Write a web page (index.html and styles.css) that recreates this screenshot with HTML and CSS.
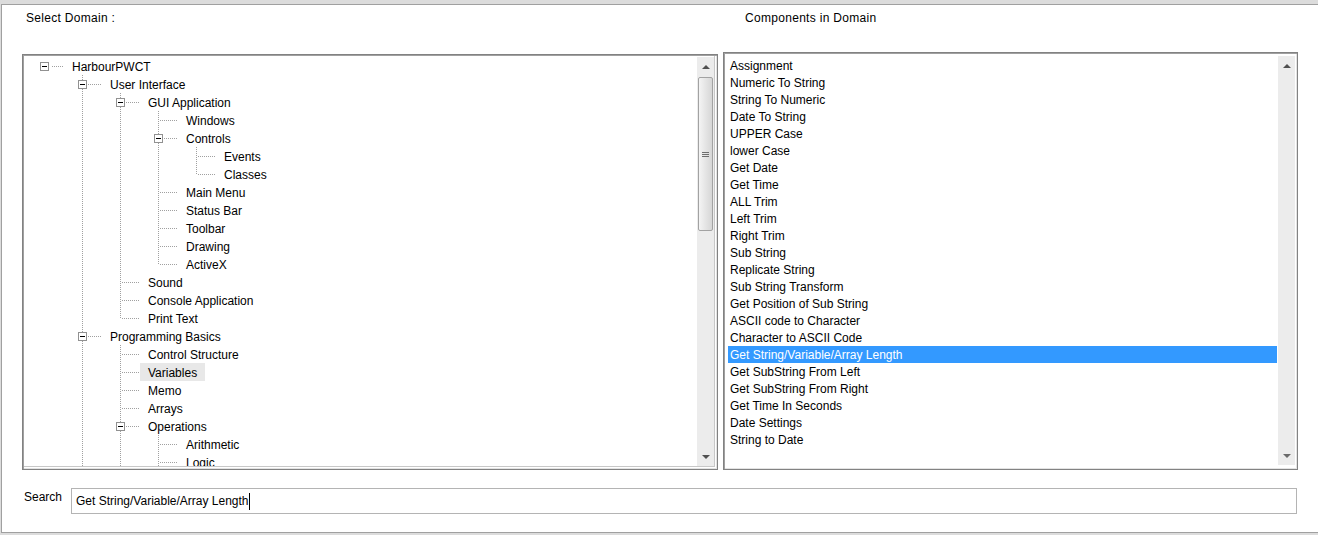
FILE: index.html
```html
<!DOCTYPE html>
<html>
<head>
<meta charset="utf-8">
<title>Domains</title>
<link rel="stylesheet" href="styles.css">
</head>
<body>
<div class="window">
  <div class="frame">
    <div class="labels">
      <div class="lab-left">Select Domain :</div>
      <div class="lab-right">Components in Domain</div>
    </div>
    <div class="panels">
      <div class="tree-box">
        <div class="tree">
          <div class="row"><span class="n r"><span class="box"><span></span></span></span><span class="lbl">HarbourPWCT</span></div>
          <div class="row"><span class="g"></span><span class="n t"><span class="box"><span></span></span></span><span class="lbl">User Interface</span></div>
          <div class="row"><span class="g"></span><span class="g v"></span><span class="n t"><span class="box"><span></span></span></span><span class="lbl">GUI Application</span></div>
          <div class="row"><span class="g"></span><span class="g v"></span><span class="g v"></span><span class="n t"></span><span class="lbl">Windows</span></div>
          <div class="row"><span class="g"></span><span class="g v"></span><span class="g v"></span><span class="n t"><span class="box"><span></span></span></span><span class="lbl">Controls</span></div>
          <div class="row"><span class="g"></span><span class="g v"></span><span class="g v"></span><span class="g v"></span><span class="n t"></span><span class="lbl">Events</span></div>
          <div class="row"><span class="g"></span><span class="g v"></span><span class="g v"></span><span class="g v"></span><span class="n l"></span><span class="lbl">Classes</span></div>
          <div class="row"><span class="g"></span><span class="g v"></span><span class="g v"></span><span class="n t"></span><span class="lbl">Main Menu</span></div>
          <div class="row"><span class="g"></span><span class="g v"></span><span class="g v"></span><span class="n t"></span><span class="lbl">Status Bar</span></div>
          <div class="row"><span class="g"></span><span class="g v"></span><span class="g v"></span><span class="n t"></span><span class="lbl">Toolbar</span></div>
          <div class="row"><span class="g"></span><span class="g v"></span><span class="g v"></span><span class="n t"></span><span class="lbl">Drawing</span></div>
          <div class="row"><span class="g"></span><span class="g v"></span><span class="g v"></span><span class="n l"></span><span class="lbl">ActiveX</span></div>
          <div class="row"><span class="g"></span><span class="g v"></span><span class="n t"></span><span class="lbl">Sound</span></div>
          <div class="row"><span class="g"></span><span class="g v"></span><span class="n t"></span><span class="lbl">Console Application</span></div>
          <div class="row"><span class="g"></span><span class="g v"></span><span class="n l"></span><span class="lbl">Print Text</span></div>
          <div class="row"><span class="g"></span><span class="n t"><span class="box"><span></span></span></span><span class="lbl">Programming Basics</span></div>
          <div class="row"><span class="g"></span><span class="g v"></span><span class="n t"></span><span class="lbl">Control Structure</span></div>
          <div class="row"><span class="g"></span><span class="g v"></span><span class="n t"></span><span class="lbl hov">Variables</span></div>
          <div class="row"><span class="g"></span><span class="g v"></span><span class="n t"></span><span class="lbl">Memo</span></div>
          <div class="row"><span class="g"></span><span class="g v"></span><span class="n t"></span><span class="lbl">Arrays</span></div>
          <div class="row"><span class="g"></span><span class="g v"></span><span class="n t"><span class="box"><span></span></span></span><span class="lbl">Operations</span></div>
          <div class="row"><span class="g"></span><span class="g v"></span><span class="g v"></span><span class="n t"></span><span class="lbl">Arithmetic</span></div>
          <div class="row"><span class="g"></span><span class="g v"></span><span class="g v"></span><span class="n t"></span><span class="lbl">Logic</span></div>
        </div>
        <div class="sbar">
          <div class="sbtn"><span class="arr up"></span></div>
          <div class="track">
            <div class="thumb"><span class="grip"></span></div>
          </div>
          <div class="sbtn"><span class="arr down"></span></div>
        </div>
      </div>
      <div class="list-box">
        <div class="list">
          <div class="item">Assignment</div>
          <div class="item">Numeric To String</div>
          <div class="item">String To Numeric</div>
          <div class="item">Date To String</div>
          <div class="item">UPPER Case</div>
          <div class="item">lower Case</div>
          <div class="item">Get Date</div>
          <div class="item">Get Time</div>
          <div class="item">ALL Trim</div>
          <div class="item">Left Trim</div>
          <div class="item">Right Trim</div>
          <div class="item">Sub String</div>
          <div class="item">Replicate String</div>
          <div class="item">Sub String Transform</div>
          <div class="item">Get Position of Sub String</div>
          <div class="item">ASCII code to Character</div>
          <div class="item">Character to ASCII Code</div>
          <div class="item sel">Get String/Variable/Array Length</div>
          <div class="item">Get SubString From Left</div>
          <div class="item">Get SubString From Right</div>
          <div class="item">Get Time In Seconds</div>
          <div class="item">Date Settings</div>
          <div class="item">String to Date</div>
        </div>
        <div class="sbar sbar-r">
          <div class="sbtn"><span class="arr up"></span></div>
          <div class="track"></div>
          <div class="sbtn"><span class="arr down light"></span></div>
        </div>
      </div>
    </div>
    <div class="search">
      <div class="search-label">Search</div>
      <div class="search-input">Get String/Variable/Array Length<span class="caret"></span></div>
    </div>
  </div>
</div>
</body>
</html>
```
FILE: styles.css
```css
* { box-sizing: border-box; }
html, body { margin: 0; padding: 0; }
body {
  width: 1318px;
  height: 535px;
  overflow: hidden;
  background: #dcdcdc;
  font-family: "Liberation Sans", Arial, sans-serif;
  font-size: 12px;
  color: #000;
}
.window {
  height: 535px;
  padding: 4px 0 2px 1px;
  background: #dcdcdc;
}
.frame {
  height: 529px;
  background: #fff;
  border-top: 1px solid #a0a0a0;
  border-left: 1px solid #a0a0a0;
  border-bottom: 1px solid #a0a0a0;
  display: flex;
  flex-direction: column;
}
.labels {
  display: grid;
  grid-template-columns: 696px 575px;
  column-gap: 5px;
  padding: 7px 0 0 20px;
  height: 20px;
  line-height: 13px;
  letter-spacing: 0.3px;
}
.lab-left { padding-left: 4px; }
.lab-right { padding-left: 22px; }

.panels {
  display: grid;
  grid-template-columns: 696px 575px;
  column-gap: 5px;
  padding-left: 20px;
  margin-top: 27px;
  align-items: start;
}
.tree-box {
  margin-top: 2px;
  height: 416px;
  display: flex;
  border: 1px solid #828282;
  padding: 1px 3px 3px 1px;
  box-shadow: inset 1px 1px 0 #a0a0a0, inset -1px -1px 0 #e3e3e3, inset -2px -2px 0 #ffffff, inset -3px -3px 0 #c8c8c8;
  background: #fff;
}
.tree {
  flex: 1;
  overflow: hidden;
  padding: 1px 0 0 2px;
}
.row {
  display: flex;
  height: 18px;
  white-space: nowrap;
}
.g, .n {
  flex: 0 0 38px;
  width: 38px;
  height: 18px;
}
.g.v {
  background: repeating-linear-gradient(to bottom, #a0a0a0 0 1px, transparent 1px 2px) 18px 0 / 1px 18px no-repeat;
}
.n {
  display: flex;
  align-items: center;
  padding-left: 14px;
}
.n.t {
  background:
    repeating-linear-gradient(to bottom, #a0a0a0 0 1px, transparent 1px 2px) 18px 0 / 1px 18px no-repeat,
    repeating-linear-gradient(to right, #a0a0a0 0 1px, transparent 1px 2px) 20px 9px / 18px 1px no-repeat;
}
.n.l {
  background:
    repeating-linear-gradient(to bottom, #a0a0a0 0 1px, transparent 1px 2px) 18px 0 / 1px 10px no-repeat,
    repeating-linear-gradient(to right, #a0a0a0 0 1px, transparent 1px 2px) 20px 9px / 18px 1px no-repeat;
}
.n.r {
  background:
    repeating-linear-gradient(to right, #a0a0a0 0 1px, transparent 1px 2px) 26px 9px / 12px 1px no-repeat;
}
.box {
  width: 9px;
  height: 9px;
  margin-top: 1px;
  border: 1px solid #919191;
  background: #fff;
  display: flex;
  align-items: center;
  justify-content: center;
}
.box span {
  width: 5px;
  height: 1px;
  background: #000;
}
.lbl {
  padding: 1px 8px 0;
  height: 18px;
  line-height: 18px;
}
.lbl.hov { background: #e8e8e8; }

.sbar {
  flex: 0 0 17px;
  width: 17px;
  display: flex;
  flex-direction: column;
  background: #ececec;
  margin: 1px 0 0;
}
.sbtn {
  height: 19px;
  display: flex;
  align-items: center;
  justify-content: center;
}
.track {
  flex: 1;
  padding: 1px 1px 0 1px;
}
.thumb {
  height: 154px;
  border: 1px solid #a2a2a2;
  border-radius: 2px;
  background: linear-gradient(to right, #f4f4f4, #e2e2e2 60%, #d6d6d6);
  display: flex;
  align-items: center;
  justify-content: center;
}
.grip {
  width: 7px;
  height: 5px;
  background: repeating-linear-gradient(to bottom, #6e6e6e 0 1px, transparent 1px 2px);
}
.arr {
  width: 0;
  height: 0;
  border-left: 4px solid transparent;
  border-right: 4px solid transparent;
}
.arr.up { border-bottom: 4px solid #505050; }
.arr.down { border-top: 4px solid #505050; }
.arr.down.light { border-top-color: #6a6a6a; }

.list-box {
  height: 418px;
  display: flex;
  border: 1px solid #828282;
  padding: 1px 2px 1px 1px;
  box-shadow: inset 1px 1px 0 #a0a0a0, inset -1px -1px 0 #e3e3e3;
  background: #fff;
}
.list {
  flex: 1;
  overflow: hidden;
  padding: 3px 1px 0 3px;
}
.item {
  height: 17px;
  line-height: 17px;
  padding: 1px 0 0 2px;
  white-space: nowrap;
}
.item.sel {
  background: #3399ff;
  color: #fff;
}
.sbar-r { margin: 2px 0 3px; }

.search {
  display: flex;
  align-items: flex-start;
  padding-left: 22px;
  margin-top: 18px;
}
.search-label {
  width: 47px;
  padding-top: 2px;
  line-height: 14px;
}
.search-input {
  width: 1226px;
  height: 26px;
  border: 1px solid #b4b4b4;
  padding-left: 4px;
  line-height: 24px;
  white-space: nowrap;
  display: flex;
  align-items: center;
}
.caret {
  display: inline-block;
  width: 1px;
  height: 17px;
  background: #000;
}
```
